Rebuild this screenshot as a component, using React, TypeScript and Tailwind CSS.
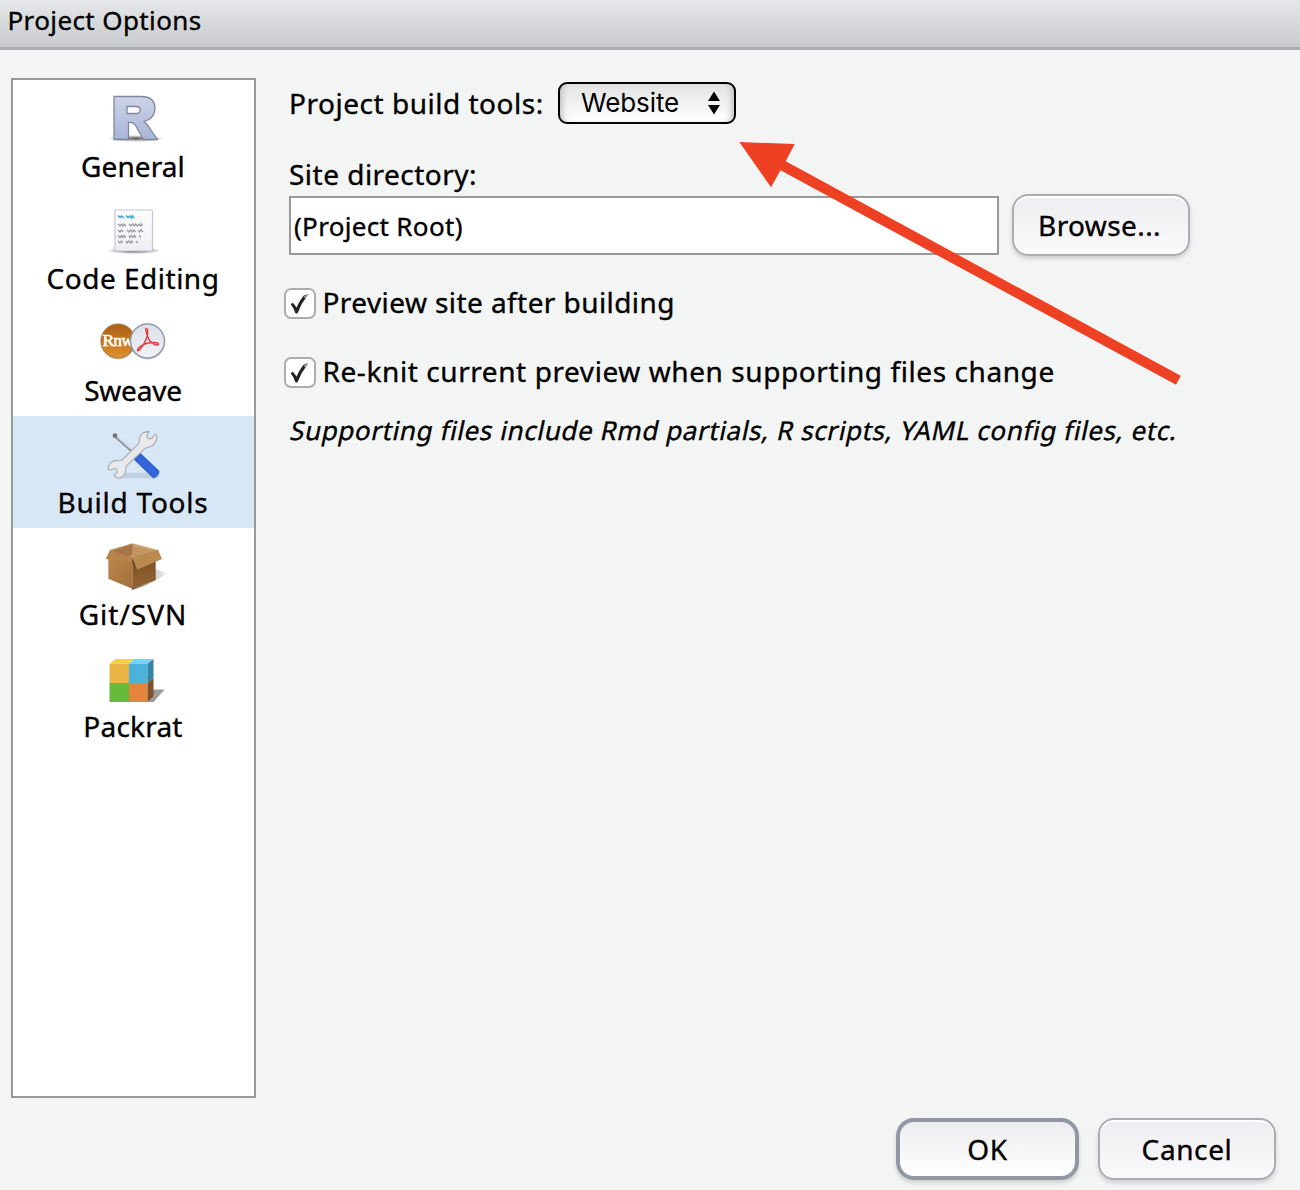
import type { ReactNode } from "react";

function RIcon() {
  return (
    <svg width="64" height="56" viewBox="0 0 64 56">
      <defs>
        <linearGradient id="rFill" x1="0" y1="0" x2="0" y2="1">
          <stop offset="0" stopColor="#cdd3e8" />
          <stop offset="1" stopColor="#a9b5d8" />
        </linearGradient>
        <radialGradient id="rShade">
          <stop offset="0" stopColor="#444" stopOpacity=".9" />
          <stop offset="1" stopColor="#555" stopOpacity="0" />
        </radialGradient>
      </defs>
      <ellipse cx="35" cy="47.5" rx="28" ry="3.5" fill="url(#rShade)" />
      <path
        fillRule="evenodd"
        d="M13 5.500H40C50 5.500 54 10.500 54 17.500C54 24.500 50 28.500 43 30.500Q45 32 46.500 34L56.500 48.500H42.500L34 33.500Q32 31 27.500 31.500V48.500H13ZM26 15.500V22.500H35C40.500 22.500 40.500 15.500 35 15.500Z"
        fill="url(#rFill)"
        stroke="#7d879e"
        strokeWidth="1.300"
        strokeLinejoin="round"
      />
    </svg>
  );
}

function DocIcon() {
  return (
    <svg width="64" height="56" viewBox="0 0 64 56">
      <defs>
        <linearGradient id="docFill" x1="0" y1="0" x2="0" y2="1">
          <stop offset="0" stopColor="#fdfdfe" />
          <stop offset="1" stopColor="#eeeff5" />
        </linearGradient>
        <radialGradient id="docShade">
          <stop offset="0" stopColor="#333" />
          <stop offset="1" stopColor="#444" stopOpacity="0" />
        </radialGradient>
      </defs>
      <ellipse cx="33" cy="47.500" rx="27" ry="3.500" fill="url(#docShade)" />
      <rect x="14" y="7" width="37.500" height="41" rx="1" fill="url(#docFill)" stroke="#c3c7d2" strokeWidth="1.200" />
      <g fill="none" strokeWidth="1.200">
        <path d="M17 12.500l2 2l1.500-1.500l2.500 2M25 12.500l2 2l2-1.500l1.500 2l1-2l1.500 2" stroke="#38a5dd" strokeWidth="1.500" />
        <g stroke="#93969c">
          <path d="M17 21l2 2l1.500-2l1.500 2l1-2l2 2M28 21l2 2l1.500-2l2 2l1-2l2 2l1.500-2l1.500 2l1-2l1 2" />
          <path d="M17 27l2 2l1.500-2l1.500 2M26 27l2 2l1.500-2l2 2l1-2l2 2M37 27l1.500 2l1.500-2l2 2" />
          <path d="M17 32.500l2 2l1.500-2l1.500 2l1-2l2 2M28 32.500l1 2l1.500-2l2 2l1-2l1.500 2M38 32.500l2 2" />
          <path d="M17 38l2 2l1.500-2l1.500 2M25 38l1 2l1.500-2l2 2l1-2l1.500 2M35 38l2 2" />
        </g>
      </g>
    </svg>
  );
}

function SweaveIcon() {
  return (
    <svg width="66" height="56" viewBox="0 0 66 56">
      <defs>
        <linearGradient id="rnw" x1="0" y1="0" x2="0" y2="1">
          <stop offset="0" stopColor="#a9601a" />
          <stop offset=".5" stopColor="#c4761f" />
          <stop offset="1" stopColor="#dd912f" />
        </linearGradient>
        <linearGradient id="pdf" x1="0" y1="0" x2="0" y2="1">
          <stop offset="0" stopColor="#dde0e6" />
          <stop offset="1" stopColor="#f1f2f6" />
        </linearGradient>
        <clipPath id="rnwClip">
          <circle cx="18" cy="26" r="17" />
        </clipPath>
      </defs>
      <circle cx="18" cy="27" r="17.500" fill="#000" opacity=".2" />
      <circle cx="18" cy="26" r="17" fill="url(#rnw)" stroke="#a8763a" strokeWidth="1" />
      <text x="2.500" y="31" clipPath="url(#rnwClip)" fontFamily="Liberation Serif, serif" fontSize="17.500" fontWeight="400" letterSpacing="-.8" fill="#fff" stroke="#fff" strokeWidth=".6">
        Rnw
      </text>
      <circle cx="47.500" cy="27" r="17.500" fill="#000" opacity=".2" />
      <circle cx="47.500" cy="26" r="17" fill="url(#pdf)" stroke="#8f9cb0" strokeWidth="1.500" />
      <path
        d="M46.500 17.500C44.500 14 46.500 12 47.600 15C48.500 19 46 27 41 33C38 37.500 36 35.500 39 32.500C43 29 49 27.500 54 27.500C60 27.500 59.500 30.500 56 30C51 29 47 23 46.500 17.500Z"
        fill="none"
        stroke="#e03a3c"
        strokeWidth="1.400"
      />
    </svg>
  );
}

function ToolsIcon() {
  return (
    <svg width="64" height="56" viewBox="0 0 64 56">
      <defs>
        <linearGradient id="steel" x1="0" y1="0" x2="1" y2="1">
          <stop offset="0" stopColor="#fdfdfd" />
          <stop offset=".5" stopColor="#e6e8eb" />
          <stop offset="1" stopColor="#f5f6f8" />
        </linearGradient>
        <linearGradient id="handle" x1="0" y1="1" x2="1" y2="0">
          <stop offset="0" stopColor="#1d47b4" />
          <stop offset=".5" stopColor="#3468dc" />
          <stop offset="1" stopColor="#1c4cc8" />
        </linearGradient>
      </defs>
      <g transform="translate(-11 -7) scale(.33333)" strokeLinejoin="round">
        <path d="M80 158H204V175H80Z" fill="#8a9bb0" opacity=".3" />
        <path d="M76 50L132 100" stroke="#8d9095" strokeWidth="7" />
        <path d="M78 49L132 97" stroke="#cfd2d6" strokeWidth="3" />
        <circle cx="75" cy="47" r="7" fill="#77736f" />
        <path d="M128 108L147 96L207 153Q208 168 190 174L134 120Z" fill="url(#handle)" stroke="#2450b0" strokeWidth="2" />
        <path
          d="M178 34Q148 36 148 60Q150 68 143 74L96 120Q88 124 78 121Q56 124 54 148L64 150L74 144Q84 146 80 158L72 167Q78 175 90 174Q106 168 107 150Q106 142 111 136L162 88Q168 82 178 81Q199 76 201 50L196 42L186 55Q174 58 170 50Q170 42 178 34Z"
          fill="url(#steel)"
          stroke="#aaacb1"
          strokeWidth="3.500"
        />
      </g>
    </svg>
  );
}

function BoxIcon() {
  return (
    <svg width="70" height="56" viewBox="0 0 70 56">
      <defs>
        <linearGradient id="boxL" x1="0" y1="0" x2="1" y2="1">
          <stop offset="0" stopColor="#b9864c" />
          <stop offset="1" stopColor="#a1713c" />
        </linearGradient>
        <linearGradient id="boxR" x1="0" y1="0" x2="0" y2="1">
          <stop offset="0" stopColor="#7d5127" />
          <stop offset="1" stopColor="#93642f" />
        </linearGradient>
        <linearGradient id="boxShade" x1="0" y1="0" x2="1" y2="0">
          <stop offset="0" stopColor="#444" stopOpacity=".8" />
          <stop offset="1" stopColor="#888" stopOpacity=".1" />
        </linearGradient>
      </defs>
      <g transform="translate(-8 -4) scale(.33333)">
        <path d="M125 166L165 152L234 116L196 102L130 140Z" fill="url(#boxShade)" />
        <path d="M60 45L128 25L128 72L60 62Z" fill="#b98a55" />
        <path d="M128 25L203 45L128 75Z" fill="#cda26d" />
        <path d="M68 48L128 28V58L100 68Z" fill="#a67543" />
        <path d="M128 34L192 48L128 72Z" fill="#c39560" />
        <path d="M55 68L127 76V161L55 131Z" fill="url(#boxL)" />
        <path d="M127 76L197 68V136L127 161Z" fill="url(#boxR)" />
        <path d="M60 45L127 68V80L120 82L47 72Z" fill="#b5834b" />
        <path d="M127 67L204 44L216 72L141 104Z" fill="#b98950" />
        <path d="M127 67L141 104L136 106L126 82Z" fill="#7a4f26" />
      </g>
    </svg>
  );
}

function CubeIcon() {
  return (
    <svg width="64" height="56" viewBox="0 0 64 56">
      <g transform="translate(-.5 3)">
        <path d="M47 48H53L64 35.500H53Z" fill="#9a9a9a" />
        <path d="M9 10L15 5H34L28 10Z" fill="#f6d04a" />
        <path d="M28 10L34 5H53L47 10Z" fill="#6fd5fb" />
        <path d="M9 10H28.500V29H9Z" fill="#eab545" />
        <path d="M28.500 10H47V29H28.500Z" fill="#4bb2dc" />
        <path d="M9 29H28.500V48H9Z" fill="#68bb3a" />
        <path d="M28.500 29H47V48H28.500Z" fill="#e5853c" />
        <path d="M47 10L53 5V24L47 29Z" fill="#3584a2" />
        <path d="M47 29L53 24V42L47 48Z" fill="#7d4f2b" />
      </g>
    </svg>
  );
}

const sections: { label: string; icon: ReactNode; spacing: string; active?: boolean }[] = [
  { label: "General", icon: <RIcon />, spacing: "tracking-[0.1px]" },
  { label: "Code Editing", icon: <DocIcon />, spacing: "tracking-[0.5px]" },
  { label: "Sweave", icon: <SweaveIcon />, spacing: "-tracking-[0.2px]" },
  { label: "Build Tools", icon: <ToolsIcon />, spacing: "tracking-[0.75px]", active: true },
  { label: "Git/SVN", icon: <BoxIcon />, spacing: "tracking-[1px]" },
  { label: "Packrat", icon: <CubeIcon />, spacing: "tracking-[0.2px]" },
];

function Checkbox({ label, spacing }: { label: string; spacing: string }) {
  return (
    <label className="flex h-[31px] items-start">
      <span className="h-[31px] w-8 shrink-0 rounded-[7px] border-2 border-[#adadad] bg-white">
        <svg width="28" height="27" viewBox="0 0 28 27" fill="none">
          <path d="M6.500 14.500Q9 17 10.500 22Q13.500 13 19 6.500" stroke="#222" strokeWidth="3" strokeLinecap="round" strokeLinejoin="round" />
          <path d="M19 7L21 5" stroke="#9a9a9a" strokeWidth="2.200" strokeLinecap="round" />
        </svg>
      </span>
      <span className={`ml-[6.5px] -mt-1 whitespace-nowrap ${spacing}`}>{label}</span>
    </label>
  );
}

function Arrow() {
  return (
    <svg className="pointer-events-none absolute left-[739px] top-[141px]" width="443" height="245" viewBox="739 141 443 245">
      <path d="M739.300 142L794.700 144L785.700 161.300L1180.700 375.700L1176 384.700L780.500 170.300L771 187.300Z" fill="#ee4023" />
    </svg>
  );
}

export default function App() {
  return (
    <div className="relative flex h-[1190px] w-[1300px] flex-col overflow-hidden bg-[#f3f5f4] font-['Noto_Sans',sans-serif] text-[28px] leading-9 text-black [-webkit-text-stroke:0.35px_black]">
      <header className="h-[50px] shrink-0 border-b-[3px] border-[#aaabaf] bg-linear-to-b from-[#e6e7ea] to-[#c9cacd] pl-[7.5px] text-[26px] leading-10 tracking-[0.38px]">
        Project Options
      </header>

      <div className="flex pl-[11px] pt-7">
        <nav className="h-[1020px] w-[245px] shrink-0 border-2 border-[#999] bg-white">
          {sections.map((s) => (
            <div
              key={s.label}
              className={`flex h-28 flex-col items-center pr-px pt-[11px] ${s.active ? "bg-[#d8e7f6]" : ""}`}
            >
              <span className="h-14 [-webkit-text-stroke:0]">{s.icon}</span>
              <span className={`leading-[38px] ${s.spacing}`}>{s.label}</span>
            </div>
          ))}
        </nav>

        <main className="ml-[33px] flex-1 pt-1">
          <div className="flex">
            <span className="w-[269px] whitespace-nowrap pt-[3px] tracking-[0.52px]">Project build tools:</span>
            <div className="flex h-[42px] w-[178px] justify-between rounded-[9px] border-2 border-black bg-linear-to-b from-[#e3e3e3] to-white pl-[21px] pr-3.5 font-[Inter,sans-serif] text-[26px] leading-[37px] tracking-[-0.1px] shadow-[inset_7px_0_6px_-5px_#bbb,inset_-7px_0_6px_-5px_#bbb] [-webkit-text-stroke:0]">
              Website
              <svg className="mt-[7px]" width="12" height="24" viewBox="0 0 12 24">
                <path d="M0 10L6 0.500L12 10ZM0 14L6 23.500L12 14Z" />
              </svg>
            </div>
          </div>

          <div className="mt-8 tracking-[0.48px]">Site directory:</div>
          <div className="flex">
            <div className="mt-1 h-[59px] w-[710px] border-2 border-[#999] bg-white pl-[3px] text-[26px] leading-[56px] tracking-[0.32px]">
              (Project Root)
            </div>
            <button className="ml-[13px] mt-0.5 h-[62px] w-[178px] rounded-[16px] border-2 border-[#acadb2] bg-linear-to-b from-[#ededf1] to-[#fafafb] pr-[3px] text-[28px] tracking-[0.4px] shadow-[0_3px_4px_rgba(0,0,0,0.15),inset_0_2px_0_#fff]">
              Browse...
            </button>
          </div>

          <div className="-ml-[5px] mt-8 flex flex-col gap-[38px]">
            <Checkbox label="Preview site after building" spacing="tracking-[0.42px]" />
            <Checkbox label="Re-knit current preview when supporting files change" spacing="tracking-[0.58px]" />
          </div>

          <div className="mt-6 ml-0.5 origin-left -skew-x-12 whitespace-nowrap text-[26px] tracking-[0.6px]">
            Supporting files include Rmd partials, R scripts, YAML config files, etc.
          </div>
        </main>
      </div>

      <footer className="mr-6 mt-5 flex justify-end gap-[19px]">
        <button className="h-[62px] w-[183px] rounded-[18px] border-4 border-[#9298a3] bg-linear-to-b from-[#ededf0] to-white text-[28px] tracking-[0.6px] shadow-[0_3px_4px_rgba(0,0,0,0.15)]">
          OK
        </button>
        <button className="h-[62px] w-[178px] rounded-[16px] border-2 border-[#acadb2] bg-linear-to-b from-[#ededf1] to-[#fafafb] text-[28px] tracking-[0.6px] shadow-[0_3px_4px_rgba(0,0,0,0.15),inset_0_2px_0_#fff]">
          Cancel
        </button>
      </footer>

      <Arrow />
    </div>
  );
}
